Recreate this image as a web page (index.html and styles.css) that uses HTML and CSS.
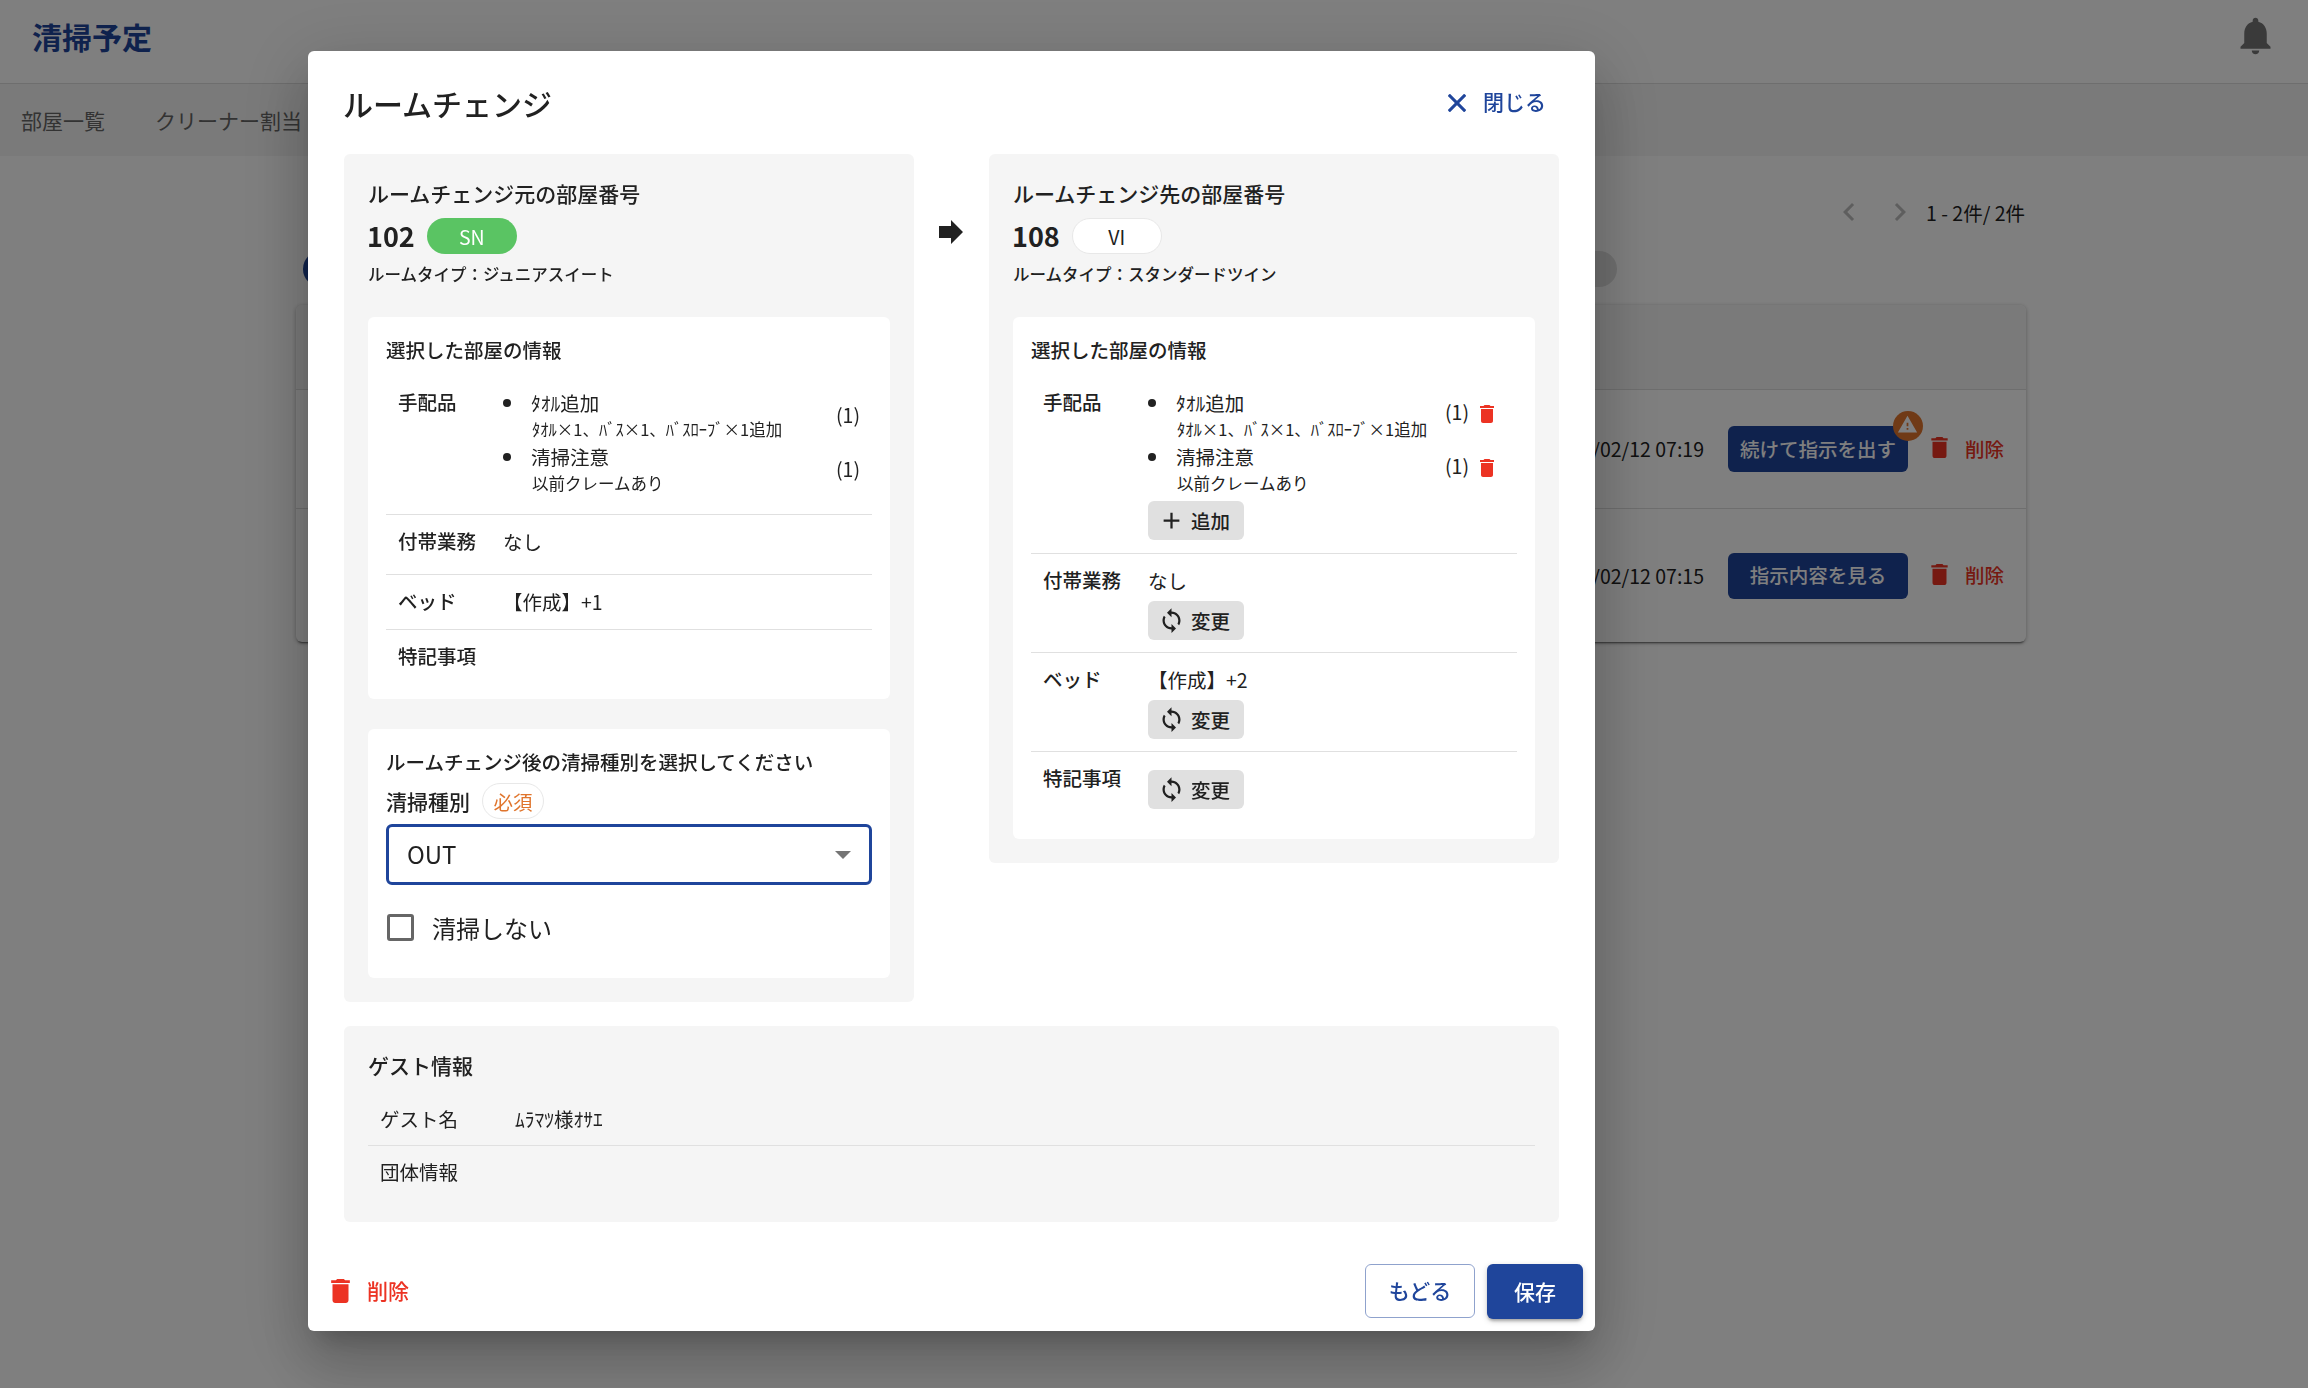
FILE: index.html
```
<!DOCTYPE html>
<html lang="ja">
  <head>
    <title>清掃予定</title>
    <meta charset="utf-8" />
    <link rel="stylesheet" href="styles.css">
  </head>
  <body>
    <svg class="sprite">
      <symbol id="icon-trash" viewBox="5 3 14 18">
        <path d="M6 19c0 1.100.9 2 2 2h8c1.100 0 2-.9 2-2V7H6v12zM19 4h-3.500l-1-1h-5l-1 1H5v2h14V4z" />
      </symbol>
      <symbol id="icon-loop" viewBox="0 0 24 24">
        <path d="M12 4V1L8 5l4 4V6c3.310 0 6 2.690 6 6 0 1.010-.25 1.970-.7 2.800l1.460 1.460C19.540 15.030 20 13.570 20 12c0-4.420-3.580-8-8-8zm0 14c-3.310 0-6-2.690-6-6 0-1.010.25-1.970.7-2.800L5.240 7.740C4.460 8.970 4 10.430 4 12c0 4.420 3.580 8 8 8v3l4-4-4-4v3z" />
      </symbol>
      <symbol id="icon-plus" viewBox="0 0 24 24">
        <path d="M19 13h-6v6h-2v-6H5v-2h6V5h2v6h6v2z" />
      </symbol>
    </svg>

    <div class="page">
      <header class="header">
        <h1 class="logo">清掃予定</h1>
        <svg class="bell" viewBox="0 0 24 24">
          <path d="M12 22c1.100 0 2-.9 2-2h-4c0 1.100.89 2 2 2zm6-6v-5c0-3.070-1.640-5.640-4.500-6.320V4c0-.83-.67-1.500-1.500-1.500s-1.500.67-1.500 1.500v.68C7.630 5.360 6 7.920 6 11v5l-2 2v1h16v-1l-2-2z" />
        </svg>
      </header>
      <nav class="nav">
        <span>部屋一覧</span>
        <span>クリーナー割当</span>
      </nav>
      <main class="main">
        <div class="pagination">
          <svg class="chevron" viewBox="0 0 24 24"><path d="M15.410 7.410 14 6l-6 6 6 6 1.410-1.410L10.830 12z" /></svg>
          <svg class="chevron" viewBox="0 0 24 24"><path d="M10 6 8.590 7.410 13.170 12l-4.580 4.590L10 18l6-6z" /></svg>
          <span class="pagination-text">1 - 2件/ 2件</span>
        </div>
        <div class="filters">
          <span class="filter filter-active"></span>
          <span class="filter"></span>
        </div>
        <div class="table">
          <div class="table-head"></div>
          <div class="table-row">
            <span class="date">2025/02/12 07:19</span>
            <button class="action">
              続けて指示を出す
              <span class="badge">
                <svg viewBox="0 0 24 24"><path d="M1 21h22L12 2 1 21zm12-3h-2v-2h2v2zm0-4h-2v-4h2v4z" /></svg>
              </span>
            </button>
            <span class="row-delete"><svg class="trash"><use href="#icon-trash" /></svg>削除</span>
          </div>
          <div class="table-row table-row-last">
            <span class="date">2025/02/12 07:15</span>
            <button class="action">指示内容を見る</button>
            <span class="row-delete"><svg class="trash"><use href="#icon-trash" /></svg>削除</span>
          </div>
        </div>
      </main>
    </div>

    <div class="backdrop">
      <div class="dialog">
        <div class="dialog-header">
          <h2 class="dialog-title">ルームチェンジ</h2>
          <span class="close">
            <svg viewBox="5 5 14 14"><path d="M19 6.410 17.590 5 12 10.590 6.410 5 5 6.410 10.590 12 5 17.590 6.410 19 12 13.410 17.590 19 19 17.590 13.410 12z" /></svg>
            閉じる
          </span>
        </div>

        <div class="rooms">
          <section class="panel">
            <h3 class="panel-title">ルームチェンジ元の部屋番号</h3>
            <div class="room">
              <span class="room-number">102</span>
              <span class="chip chip-green">SN</span>
            </div>
            <p class="room-type">ルームタイプ：ジュニアスイート</p>

            <div class="card">
              <h4 class="card-title">選択した部屋の情報</h4>
              <div class="row row-first">
                <span class="row-label">手配品</span>
                <ul class="items">
                  <li class="item">
                    <div class="item-text">ﾀｵﾙ追加<small>ﾀｵﾙ×1、ﾊﾞｽ×1、ﾊﾞｽﾛｰﾌﾞ×1追加</small></div>
                    <span class="count">(1)</span>
                  </li>
                  <li class="item">
                    <div class="item-text">清掃注意<small>以前クレームあり</small></div>
                    <span class="count">(1)</span>
                  </li>
                </ul>
              </div>
              <div class="row row-extra">
                <span class="row-label">付帯業務</span>
                <span class="row-value">なし</span>
              </div>
              <div class="row row-bed">
                <span class="row-label">ベッド</span>
                <span class="row-value">【作成】+1</span>
              </div>
              <div class="row row-note">
                <span class="row-label">特記事項</span>
              </div>
            </div>

            <div class="card card-clean">
              <h4 class="card-title">ルームチェンジ後の清掃種別を選択してください</h4>
              <div class="field-label">
                清掃種別
                <span class="chip chip-required">必須</span>
              </div>
              <div class="select">
                OUT
                <span class="select-arrow"></span>
              </div>
              <label class="check">
                <span class="check-box"></span>
                清掃しない
              </label>
            </div>
          </section>

          <svg class="arrow" viewBox="0 0 24 24"><path d="M0 6h12V0l12 12-12 12v-6H0z" /></svg>

          <section class="panel">
            <h3 class="panel-title">ルームチェンジ先の部屋番号</h3>
            <div class="room">
              <span class="room-number">108</span>
              <span class="chip">VI</span>
            </div>
            <p class="room-type">ルームタイプ：スタンダードツイン</p>

            <div class="card card-edit">
              <h4 class="card-title">選択した部屋の情報</h4>
              <div class="row row-first">
                <span class="row-label">手配品</span>
                <div class="row-body">
                  <ul class="items">
                    <li class="item">
                      <div class="item-text">ﾀｵﾙ追加<small>ﾀｵﾙ×1、ﾊﾞｽ×1、ﾊﾞｽﾛｰﾌﾞ×1追加</small></div>
                      <span class="count">(1)<svg class="trash"><use href="#icon-trash" /></svg></span>
                    </li>
                    <li class="item">
                      <div class="item-text">清掃注意<small>以前クレームあり</small></div>
                      <span class="count">(1)<svg class="trash"><use href="#icon-trash" /></svg></span>
                    </li>
                  </ul>
                  <button class="small-button"><svg><use href="#icon-plus" /></svg>追加</button>
                </div>
              </div>
              <div class="row row-change">
                <span class="row-label">付帯業務</span>
                <div class="row-body">
                  <span class="row-value">なし</span>
                  <button class="small-button"><svg><use href="#icon-loop" /></svg>変更</button>
                </div>
              </div>
              <div class="row row-change">
                <span class="row-label">ベッド</span>
                <div class="row-body">
                  <span class="row-value">【作成】+2</span>
                  <button class="small-button"><svg><use href="#icon-loop" /></svg>変更</button>
                </div>
              </div>
              <div class="row row-note">
                <span class="row-label">特記事項</span>
                <div class="row-body">
                  <button class="small-button"><svg><use href="#icon-loop" /></svg>変更</button>
                </div>
              </div>
            </div>
          </section>
        </div>

        <section class="panel guest">
          <h3 class="panel-title">ゲスト情報</h3>
          <div class="guest-row">
            <span class="guest-label">ゲスト名</span>
            <span>ﾑﾗﾏﾂ様ｵｻｴ</span>
          </div>
          <div class="guest-row">
            <span class="guest-label">団体情報</span>
          </div>
        </section>

        <div class="dialog-footer">
          <span class="delete"><svg class="trash"><use href="#icon-trash" /></svg>削除</span>
          <button class="button button-outlined">もどる</button>
          <button class="button button-primary">保存</button>
        </div>
      </div>
    </div>
  </body>
</html>
```
FILE: styles.css
```
* {
  box-sizing: border-box;
}

body {
  margin: 0;
  height: 1388px;
  overflow: hidden;
  font-family: "Noto Sans CJK JP", sans-serif;
  font-size: 19.5px;
  line-height: 27px;
  color: #212121;
  background-color: #fff;
}

h1,
h2,
h3,
h4,
p,
ul {
  margin: 0;
  padding: 0;
}

button {
  padding: 0;
  border: none;
  border-radius: 6px;
  font-family: inherit;
  font-size: 19.5px;
  font-weight: 500;
  cursor: pointer;
}

svg {
  display: block;
  fill: currentColor;
}

.sprite {
  display: none;
}

/* page behind the dialog */

.header {
  display: flex;
  justify-content: space-between;
  height: 84px;
  padding: 13px 30px 0 32px;
  border-bottom: 1px solid #dcdcdc;
}

.logo {
  font-size: 30px;
  line-height: 46px;
  font-weight: 700;
  color: #1f459b;
}

.bell {
  width: 45px;
  height: 45px;
  color: #757575;
}

.nav {
  display: flex;
  gap: 50px;
  height: 72px;
  padding-left: 21px;
  font-size: 21px;
  line-height: 72px;
  color: #666;
  background-color: #f5f5f5;
}

.main {
  width: 1729px;
  margin-left: 296px;
  padding-top: 38px;
}

.pagination {
  display: flex;
  justify-content: flex-end;
  align-items: center;
  height: 36px;
}

.chevron {
  width: 36px;
  height: 36px;
  margin-right: 15px;
  color: #bdbdbd;
}

.chevron + .chevron {
  margin-right: 8px;
}

.pagination-text {
  padding-top: 1px;
}

.filters {
  display: flex;
  justify-content: space-between;
  width: 1314px;
  margin: 21px 0 18px 7px;
}

.filter {
  width: 110px;
  height: 36px;
  border-radius: 18px;
  background-color: #e0e0e0;
}

.filter-active {
  background-color: #1f459b;
}

.table {
  width: 1730px;
  border-radius: 6px;
  box-shadow: 0 3px 2px -2px rgba(0, 0, 0, 0.5), 0 1px 4px rgba(0, 0, 0, 0.3);
}

.table-head {
  height: 85px;
  border-bottom: 1px solid #dcdcdc;
  border-radius: 6px 6px 0 0;
  background-color: #f5f5f5;
}

.table-row {
  display: flex;
  justify-content: flex-end;
  align-items: center;
  height: 119px;
  padding-right: 22px;
  border-bottom: 1px solid #dcdcdc;
}

.table-row-last {
  height: 133px;
  border-bottom: none;
}

.date {
  margin-top: -1px;
  font-size: 19.5px;
}

.action {
  position: relative;
  width: 180px;
  height: 46px;
  margin: 0 23px 0 24px;
  padding-bottom: 2px;
  color: #fff;
  background-color: #1f459b;
}

.badge {
  position: absolute;
  top: -15px;
  right: -15px;
  display: flex;
  justify-content: center;
  width: 30px;
  height: 30px;
  padding-top: 3px;
  border-radius: 50%;
  background-color: #e0752d;
}

.badge svg {
  width: 21px;
  height: 21px;
}

.row-delete {
  display: flex;
  align-items: center;
  gap: 17px;
  margin-top: -2px;
  font-weight: 500;
  color: #ec3323;
}

.row-delete .trash {
  width: 17px;
  height: 21px;
  margin-top: -1px;
}

/* dialog */

.backdrop {
  position: fixed;
  inset: 0;
  display: flex;
  justify-content: center;
  padding: 51px 0 57px;
  padding-right: 405px;
  background-color: rgba(0, 0, 0, 0.5);
}

.dialog {
  display: flex;
  flex-direction: column;
  width: 1287px;
  height: 1280px;
  border-radius: 6px;
  background-color: #fff;
  box-shadow: 0 17px 23px -11px rgba(0, 0, 0, 0.2),
    0 36px 57px 5px rgba(0, 0, 0, 0.14), 0 14px 69px 12px rgba(0, 0, 0, 0.12);
}

.dialog-header {
  display: flex;
  justify-content: space-between;
  height: 103px;
  padding: 28px 49px 0 35px;
}

.dialog-title {
  font-size: 30px;
  line-height: 48px;
  font-weight: 500;
}

.close {
  display: flex;
  align-items: center;
  gap: 17px;
  height: 45px;
  font-size: 21px;
  font-weight: 500;
  color: #1f459b;
}

.close svg {
  width: 18px;
  height: 18px;
  margin-top: 2px;
  stroke: currentColor;
  stroke-width: 0.5;
}

.rooms {
  display: flex;
  align-items: flex-start;
  padding: 0 36px;
}

.panel {
  width: 570px;
  padding: 23px 24px 24px;
  border-radius: 6px;
  background-color: #f5f5f5;
}

.panel-title {
  font-size: 21px;
  line-height: 32px;
  font-weight: 500;
}

.room {
  display: flex;
  align-items: center;
  gap: 12px;
  height: 36px;
  margin-top: 9px;
}

.room-number {
  margin: -2px 0 0 -1px;
  font-size: 27px;
  font-weight: 700;
}

.chip {
  display: flex;
  justify-content: center;
  align-items: center;
  width: 90px;
  height: 36px;
  border: 1px solid #e8e8e8;
  border-radius: 18px;
  font-weight: 400;
  background-color: #fff;
}

.chip-green {
  border: none;
  color: #fff;
  background-color: #5ac463;
}

.room-type {
  margin-top: 7px;
  font-size: 16.5px;
  font-weight: 500;
}

.arrow {
  width: 24px;
  height: 24px;
  margin: 66px 26px 0 25px;
}

.card {
  height: 382px;
  margin-top: 29px;
  padding: 19px 18px 0;
  border-radius: 6px;
  background-color: #fff;
}

.card-edit {
  height: 522px;
}

.card-title {
  font-size: 19.5px;
  font-weight: 500;
}

.row {
  display: flex;
  padding: 13px 12px 0;
  border-bottom: 1px solid #e0e0e0;
}

.row-first {
  height: 152px;
  padding-top: 26px;
}

.row-extra {
  height: 60px;
}

.row-bed {
  height: 55px;
}

.row-note {
  border-bottom: none;
}

.row-label {
  width: 105px;
  margin-top: -1px;
  font-weight: 500;
}

.items {
  list-style: none;
  width: 357px;
}

.item {
  display: flex;
  height: 54px;
}

.item::before {
  content: "";
  width: 8px;
  height: 8px;
  margin: 10px 20px 0 0;
  border-radius: 50%;
  background-color: #212121;
}

.item-text {
  flex: 1;
}

.item-text small {
  display: block;
  margin-left: 1px;
  font-size: 16.5px;
  line-height: 27px;
}

.count {
  display: flex;
  align-items: flex-start;
  gap: 11px;
  padding-top: 12px;
}

.count .trash {
  width: 14px;
  height: 18px;
  margin-top: 7px;
  color: #ec3323;
}

.card-edit .items {
  width: 346px;
}

.card-edit .row-first {
  height: 191px;
}

.card-edit .row-change {
  height: 99px;
}

.card-edit .count {
  padding-top: 9px;
}

.row-body {
  display: flex;
  flex-direction: column;
}

.row-body .row-value {
  height: 34px;
}

.row-first .small-button {
  margin-top: 4px;
}

.card-edit .row-note .row-body {
  padding-top: 5px;
}

.small-button {
  display: flex;
  align-items: center;
  gap: 6px;
  width: 96px;
  height: 39px;
  padding-left: 10px;
  color: #212121;
  background-color: #e0e0e0;
}

.small-button svg {
  width: 27px;
  height: 27px;
}

.card-clean {
  height: 249px;
  margin-top: 30px;
}

.field-label {
  display: flex;
  align-items: center;
  gap: 12px;
  height: 36px;
  margin: 8px 0 5px;
  font-size: 21px;
  font-weight: 500;
}

.chip-required {
  width: 62px;
  font-size: 19.5px;
  color: #e0752d;
}

.select {
  display: flex;
  justify-content: space-between;
  align-items: center;
  height: 61px;
  padding: 0 18px 2px;
  border: 3px solid #1f459b;
  border-radius: 6px;
  font-size: 24px;
}

.select-arrow {
  margin-top: 3px;
  border: 8px solid transparent;
  border-top-color: #757575;
  border-bottom: none;
}

.check {
  display: flex;
  align-items: center;
  gap: 18px;
  margin: 28px 0 0 1px;
  font-size: 24px;
}

.check-box {
  width: 27px;
  height: 27px;
  margin-top: 1px;
  border: 3px solid #666;
  border-radius: 3px;
}

.guest {
  width: auto;
  height: 196px;
  margin: 24px 36px 0;
}

.guest-row {
  display: flex;
  height: 53px;
  padding: 12px 12px 0;
}

.guest .panel-title + .guest-row {
  height: 54px;
  margin-top: 11px;
  padding-top: 13px;
  border-bottom: 1px solid #e0e0e0;
}

.guest-label {
  width: 135px;
}

.dialog-footer {
  display: flex;
  align-items: center;
  gap: 12px;
  margin-top: auto;
  padding: 0 12px 12px 23px;
}

.delete {
  display: flex;
  align-items: center;
  gap: 17px;
  margin: -2px auto 0 0;
  font-size: 21px;
  font-weight: 500;
  color: #ec3323;
}

.delete .trash {
  width: 19px;
  height: 24px;
}

.button {
  height: 55px;
  padding-bottom: 2px;
  font-size: 21px;
}

.button-outlined {
  align-self: flex-start;
  width: 110px;
  height: 54px;
  border: 1px solid #8fa2cd;
  color: #1f459b;
  background-color: #fff;
}

.button-primary {
  width: 96px;
  color: #fff;
  background-color: #1f459b;
  box-shadow: 0 3px 3px -1px rgba(0, 0, 0, 0.25), 0 2px 6px rgba(0, 0, 0, 0.18);
}
```
